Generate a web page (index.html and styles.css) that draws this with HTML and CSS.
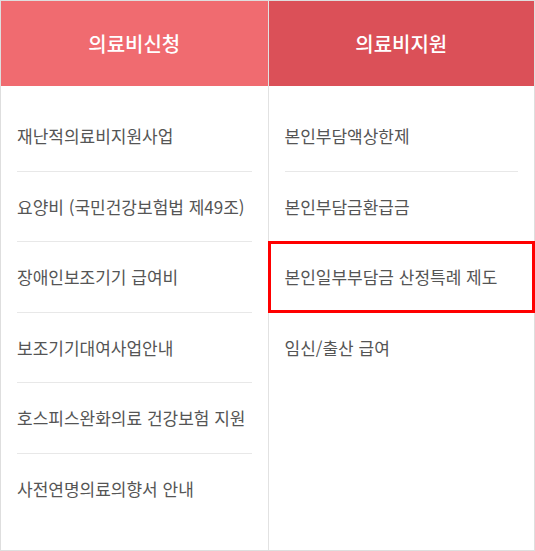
FILE: index.html
```html
<!DOCTYPE html>
<html lang="ko">
<head>
    <meta charset="UTF-8">
    <meta name="viewport" content="width=device-width, initial-scale=1.0">
    <title>의료비 안내</title>
    <link rel="stylesheet" href="styles.css">
</head>
<body>
    <div class="menu-box">
        <div class="menu-col col-apply">
            <div class="col-title">의료비신청</div>
            <ul class="col-list">
                <li>재난적의료비지원사업</li>
                <li>요양비 (국민건강보험법 제49조)</li>
                <li>장애인보조기기 급여비</li>
                <li>보조기기대여사업안내</li>
                <li>호스피스완화의료 건강보험 지원</li>
                <li>사전연명의료의향서 안내</li>
            </ul>
        </div>
        <div class="menu-col col-support">
            <div class="col-title">의료비지원</div>
            <ul class="col-list">
                <li>본인부담액상한제</li>
                <li>본인부담금환급금</li>
                <li class="is-marked">본인일부부담금 산정특례 제도</li>
                <li>임신/출산 급여</li>
            </ul>
        </div>
    </div>
</body>
</html>
```

FILE: styles.css
```css
body {
    margin: 0;
    background: #fff;
    font-family: "Noto Sans CJK KR", "Noto Sans", sans-serif;
}

.menu-box {
    width: 535px;
    height: 551px;
    box-sizing: border-box;
    border: 1px solid #dedede;
    display: grid;
    grid-template-columns: 1fr 1fr;
}

.menu-col {
    display: flex;
    flex-direction: column;
}

.col-support {
    border-left: 1px solid #e2e2e2;
}

.col-title {
    height: 85px;
    display: flex;
    align-items: center;
    justify-content: center;
    color: #fff;
    font-size: 20px;
    font-weight: 500;
}

.col-apply .col-title { background: #f06b70; }
.col-support .col-title { background: #db5058; }

.col-list {
    list-style: none;
    margin: 0;
    padding: 15px 0 0;
}

.col-list li {
    position: relative;
    margin: 0 16px;
    height: 70.5px;
    display: flex;
    align-items: center;
    font-size: 17px;
    color: #555;
    border-bottom: 1px solid #e8e8e8;
    box-sizing: border-box;
}

.col-list li:last-child {
    border-bottom: none;
}

/* 강조 표시 */
.col-list li.is-marked::after {
    content: "";
    position: absolute;
    top: -1px;
    bottom: -1px;
    left: -17px;
    right: -17px;
    border: 3px solid #f00;
}
```
